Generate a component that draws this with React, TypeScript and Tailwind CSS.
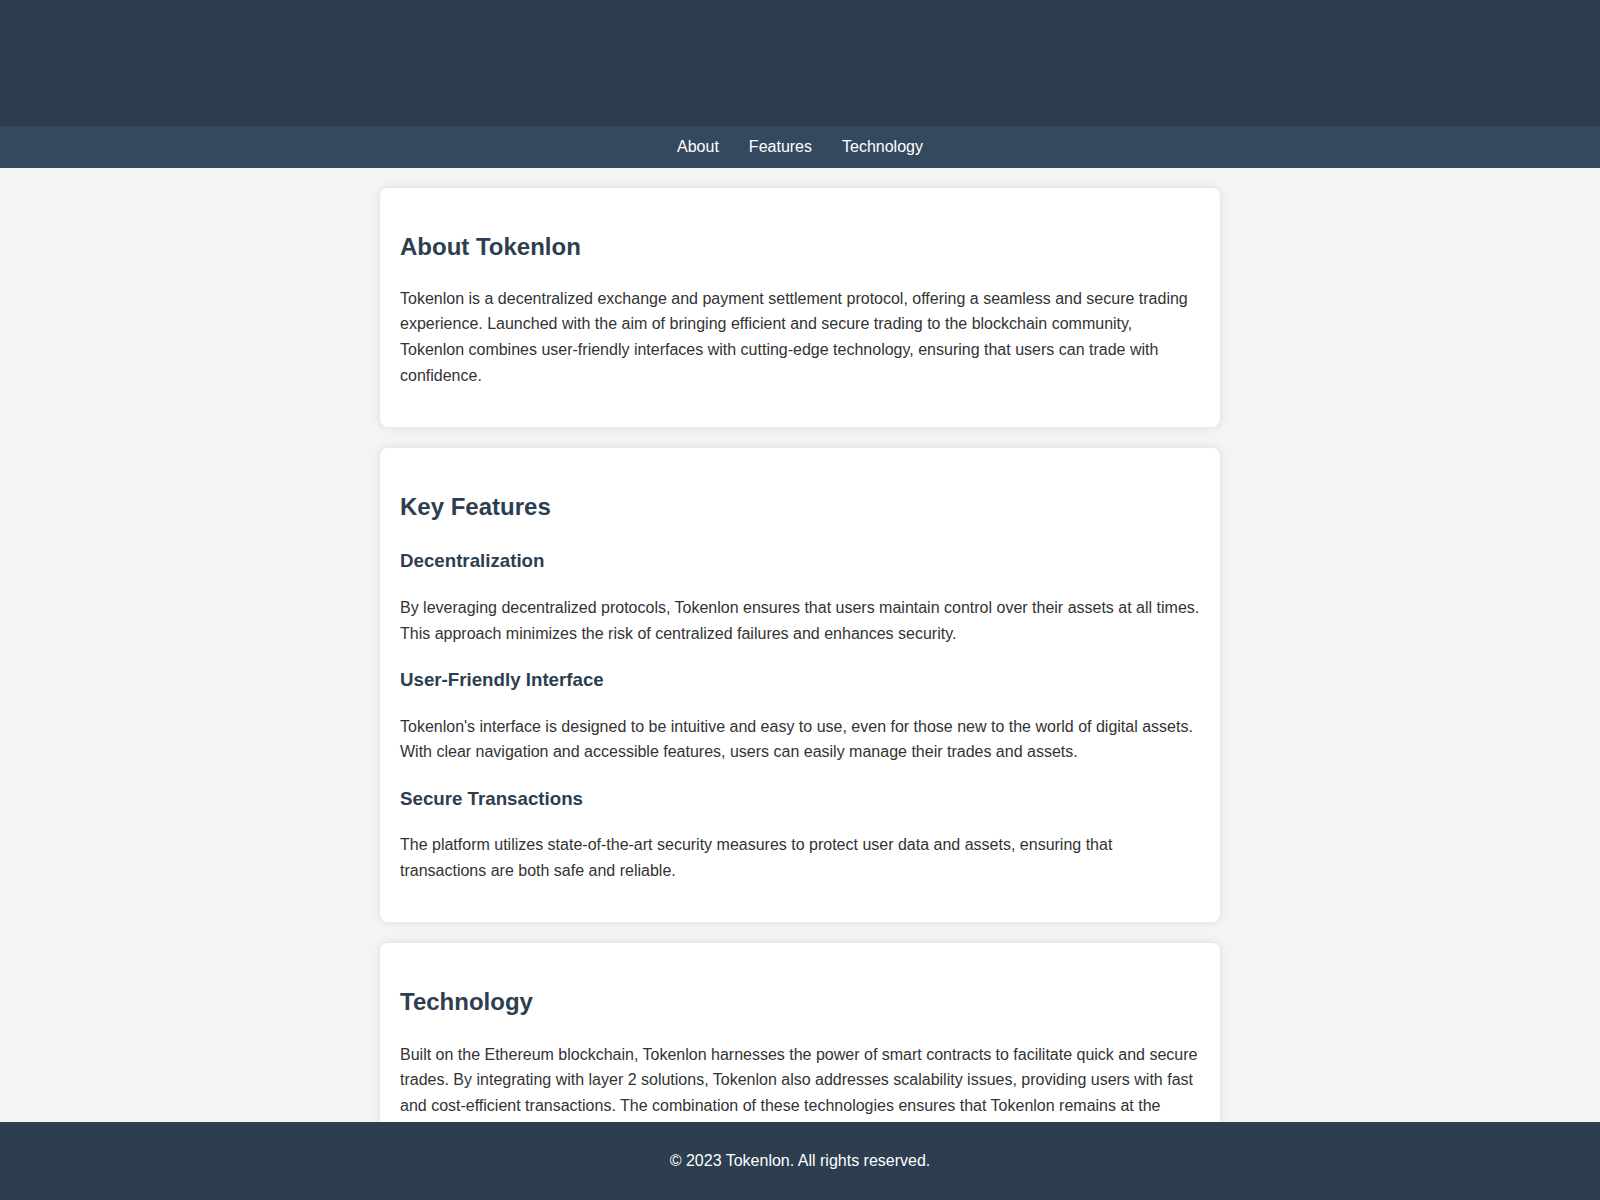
import React from 'react';

const features = [
  {
    title: 'Decentralization',
    body: 'By leveraging decentralized protocols, Tokenlon ensures that users maintain control over their assets at all times. This approach minimizes the risk of centralized failures and enhances security.',
  },
  {
    title: 'User-Friendly Interface',
    body: "Tokenlon's interface is designed to be intuitive and easy to use, even for those new to the world of digital assets. With clear navigation and accessible features, users can easily manage their trades and assets.",
  },
  {
    title: 'Secure Transactions',
    body: 'The platform utilizes state-of-the-art security measures to protect user data and assets, ensuring that transactions are both safe and reliable.',
  },
];

const Section = ({ id, title, children }: { id: string; title: string; children: React.ReactNode }) => (
  <section id={id} className="bg-white mb-[21px] px-5 pt-5 pb-[23px] rounded-lg shadow-[0_0_10px_rgba(0,0,0,0.1)]">
    <h2 className="text-2xl font-bold text-[#2c3e50] leading-[1.6] my-[19.92px]">{title}</h2>
    {children}
  </section>
);

const App = () => {
  return (
    <div className="min-h-screen bg-[#f4f4f4] text-[#333] leading-[1.6] font-['Liberation_Sans',Arial,sans-serif]">
      <header className="h-[126px] bg-[#2c3e50]" />
      <nav className="bg-[#34495e] py-2 text-center">
        <a href="#about" className="mx-[15px] text-white">About</a>
        <a href="#features" className="mx-[15px] text-white">Features</a>
        <a href="#technology" className="mx-[15px] text-white">Technology</a>
      </nav>

      <main className="max-w-[840px] mx-auto py-5 pb-[100px]">
        <Section id="about" title="About Tokenlon">
          <p className="my-4">
            Tokenlon is a decentralized exchange and payment settlement protocol, offering a seamless and secure trading experience. Launched with the aim of bringing efficient and secure trading to the blockchain community, Tokenlon combines user-friendly interfaces with cutting-edge technology, ensuring that users can trade with confidence.
          </p>
        </Section>

        <Section id="features" title="Key Features">
          {features.map((f) => (
            <div key={f.title}>
              <h3 className="text-[18.72px] font-bold text-[#2c3e50] leading-[1.6] my-[18.72px]">{f.title}</h3>
              <p className="my-4">{f.body}</p>
            </div>
          ))}
        </Section>

        <Section id="technology" title="Technology">
          <p className="my-4">
            Built on the Ethereum blockchain, Tokenlon harnesses the power of smart contracts to facilitate quick and secure trades. By integrating with layer 2 solutions, Tokenlon also addresses scalability issues, providing users with fast and cost-efficient transactions. The combination of these technologies ensures that Tokenlon remains at the forefront of decentralized finance innovation.
          </p>
        </Section>
      </main>

      <footer className="fixed bottom-0 left-0 w-full bg-[#2c3e50] text-white text-center py-[10px]">
        <p className="my-4">© 2023 Tokenlon. All rights reserved.</p>
      </footer>
    </div>
  );
};

export default App;
